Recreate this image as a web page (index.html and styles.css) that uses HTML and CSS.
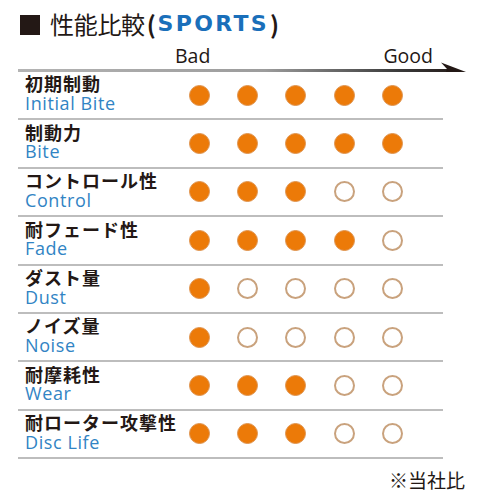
FILE: index.html
```html
<!DOCTYPE html>
<html lang="ja">
<head>
<meta charset="utf-8">
<link rel="stylesheet" href="styles.css">
</head>
<body>
<div class="page">
  <div class="header">
    <span class="square"></span>
    <h1 class="title">性能比較<span class="paren">(</span><span class="sports">SPORTS</span><span class="paren">)</span></h1>
  </div>
  <div class="scale-labels"><span>Bad</span><span>Good</span></div>
  <svg class="scale-arrow" width="485" height="10" viewBox="0 62 485 10">
    <defs>
      <linearGradient id="g" x1="18" y1="0" x2="466" y2="0" gradientUnits="userSpaceOnUse">
        <stop offset="0" stop-color="#b4b4b4"/>
        <stop offset="0.55" stop-color="#9c9c9c"/>
        <stop offset="0.85" stop-color="#3a3a3a"/>
        <stop offset="1" stop-color="#231815"/>
      </linearGradient>
    </defs>
    <rect x="18" y="69" width="440" height="3" fill="url(#g)"/>
    <polygon points="441,62.5 466,72 446,72 447,69" fill="#231815"/>
  </svg>
  <div class="table">
    <div class="row">
      <div class="label"><span class="jp">初期制動</span><span class="en">Initial Bite</span></div>
      <span class="dot on"></span><span class="dot on"></span><span class="dot on"></span><span class="dot on"></span><span class="dot on"></span>
    </div>
    <div class="row">
      <div class="label"><span class="jp">制動力</span><span class="en">Bite</span></div>
      <span class="dot on"></span><span class="dot on"></span><span class="dot on"></span><span class="dot on"></span><span class="dot on"></span>
    </div>
    <div class="row">
      <div class="label"><span class="jp">コントロール性</span><span class="en">Control</span></div>
      <span class="dot on"></span><span class="dot on"></span><span class="dot on"></span><span class="dot"></span><span class="dot"></span>
    </div>
    <div class="row">
      <div class="label"><span class="jp">耐フェード性</span><span class="en">Fade</span></div>
      <span class="dot on"></span><span class="dot on"></span><span class="dot on"></span><span class="dot on"></span><span class="dot"></span>
    </div>
    <div class="row">
      <div class="label"><span class="jp">ダスト量</span><span class="en">Dust</span></div>
      <span class="dot on"></span><span class="dot"></span><span class="dot"></span><span class="dot"></span><span class="dot"></span>
    </div>
    <div class="row">
      <div class="label"><span class="jp">ノイズ量</span><span class="en">Noise</span></div>
      <span class="dot on"></span><span class="dot"></span><span class="dot"></span><span class="dot"></span><span class="dot"></span>
    </div>
    <div class="row">
      <div class="label"><span class="jp">耐摩耗性</span><span class="en">Wear</span></div>
      <span class="dot on"></span><span class="dot on"></span><span class="dot on"></span><span class="dot"></span><span class="dot"></span>
    </div>
    <div class="row">
      <div class="label"><span class="jp">耐ローター攻撃性</span><span class="en">Disc Life</span></div>
      <span class="dot on"></span><span class="dot on"></span><span class="dot on"></span><span class="dot"></span><span class="dot"></span>
    </div>
  </div>
  <div class="note">※当社比</div>
</div>
</body>
</html>
```

FILE: styles.css
```css
html, body {
  margin: 0;
  padding: 0;
  background: #ffffff;
}

.page {
  width: 485px;
  height: 500px;
  padding-top: 12px;
  box-sizing: border-box;
  font-family: "Noto Sans CJK JP", "Noto Sans", sans-serif;
  color: #231815;
}

.header {
  display: flex;
  align-items: center;
  height: 24px;
  padding-left: 20px;
  gap: 10px;
}

.square {
  display: block;
  width: 20px;
  height: 20px;
  background: #231815;
  margin-top: 2px;
}

.title {
  margin: 0;
  font-size: 24px;
  line-height: 24px;
  font-weight: 400;
  letter-spacing: -0.3px;
  display: flex;
  align-items: center;
}

.paren {
  font-weight: 700;
  margin: 0 2px;
}

.sports {
  font-family: "DejaVu Sans", sans-serif;
  font-weight: 700;
  font-size: 22px;
  letter-spacing: 2.3px;
  color: #1a6fba;
  margin-right: -1px;
}

.scale-labels {
  display: flex;
  justify-content: space-between;
  margin: 12px 0 0 175px;
  width: 258px;
  height: 16px;
  font-family: "Open Sans", sans-serif;
  font-size: 19.5px;
  line-height: 16px;
}

.scale-arrow {
  display: block;
  margin-top: -2px;
}

.table {
  margin-left: 18px;
  width: 425px;
}

.row {
  display: grid;
  grid-template-columns: 157px repeat(5, 48.3px);
  align-items: center;
  justify-items: center;
  height: 48.4px;
  box-sizing: border-box;
  border-bottom: 2px solid #bdbdbd;
}

.label {
  justify-self: start;
  display: flex;
  flex-direction: column;
  padding-left: 7px;
  padding-bottom: 4px;
  white-space: nowrap;
}

.jp {
  font-size: 18px;
  line-height: 18px;
  font-weight: 700;
  letter-spacing: 1px;
  color: #231815;
}

.en {
  margin-top: 1.5px;
  font-family: "Open Sans", sans-serif;
  font-size: 18px;
  line-height: 18px;
  letter-spacing: 0.6px;
  color: #3184c4;
}

.dot {
  width: 21px;
  height: 21px;
  border-radius: 50%;
  box-sizing: border-box;
  border: 2.5px solid #c9a27d;
  background: #ffffff;
}

.dot.on {
  border: 1px solid #df9450;
  background: #ec7a08;
}

.note {
  margin-top: 11px;
  padding-right: 20px;
  text-align: right;
  font-size: 19px;
  line-height: 20px;
}
```
